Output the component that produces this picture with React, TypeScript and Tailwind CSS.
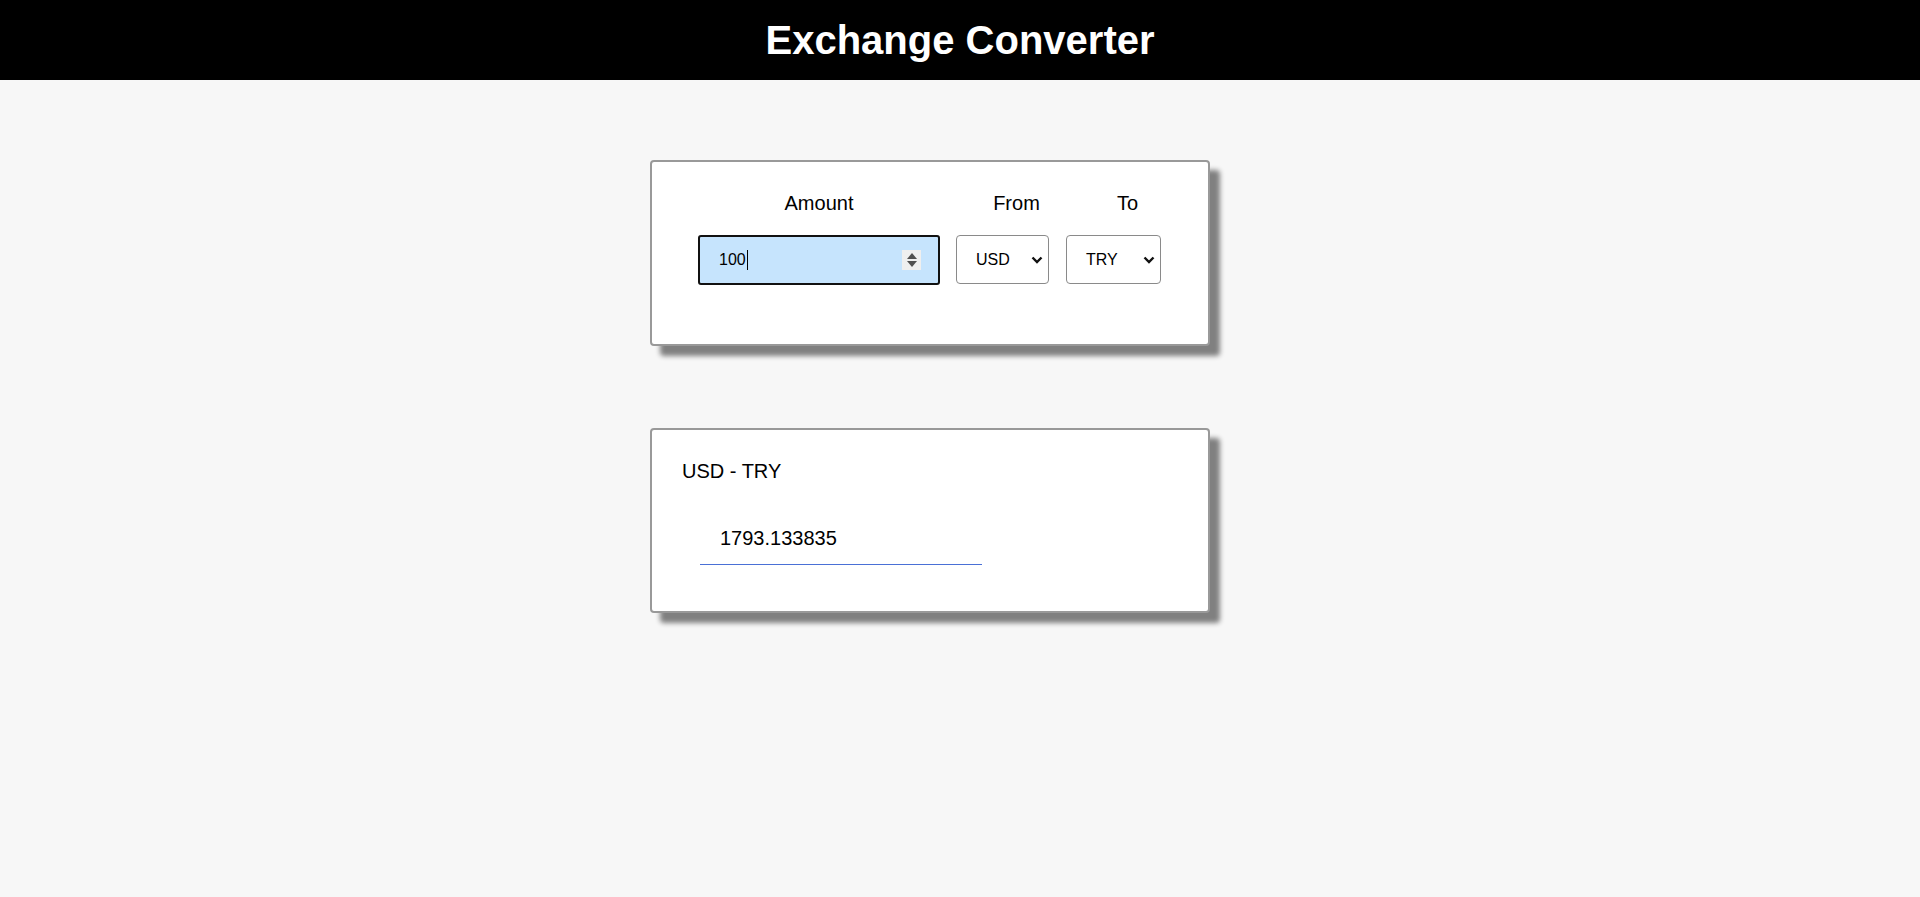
import React from 'react';

const font = { fontFamily: '"Liberation Sans", Arial, sans-serif' };

function Chevron() {
  return (
    <svg width="12" height="8" viewBox="0 0 12 8" className="shrink-0">
      <polyline points="1.5,1.5 6,6 10.5,1.5" fill="none" stroke="#111" strokeWidth="2.4" />
    </svg>
  );
}

function Spinner() {
  return (
    <div className="flex h-[20px] w-[19px] flex-col items-center justify-center gap-[2px] bg-[#efefef]">
      <svg width="10" height="6" viewBox="0 0 10 6">
        <polygon points="5,0 10,6 0,6" fill="#505050" />
      </svg>
      <svg width="10" height="6" viewBox="0 0 10 6">
        <polygon points="0,0 10,0 5,6" fill="#505050" />
      </svg>
    </div>
  );
}

function CurrencySelect({ value }: { value: string }) {
  return (
    <div className="flex h-[49px] items-center justify-between rounded-[4px] border border-[#8a8a8a] bg-white pl-[19px] pr-[5px] text-[16px] text-black">
      <span>{value}</span>
      <Chevron />
    </div>
  );
}

export default function App() {
  return (
    <div className="min-h-screen bg-[#f7f7f7]" style={font}>
      <header className="flex h-20 items-center justify-center bg-black">
        <h1 className="text-[40px] font-bold leading-none text-white">Exchange Converter</h1>
      </header>

      <main className="flex flex-col items-center pt-20">
        {/* converter form */}
        <div className="mr-[60px] h-[186px] w-[560px] rounded-[4px] border-2 border-[#999] bg-white pl-[46px] pt-[30px] shadow-[10px_10px_5px_#808080]">
          <div className="flex gap-[16px]">
            <div className="flex w-[242px] flex-col items-center gap-[20px]">
              <span className="text-[20px] leading-[23px] text-black">Amount</span>
              <div className="flex h-[50px] w-full items-center justify-between rounded-[3px] border-2 border-[#111] bg-[#c6e4fd] pl-[19px] pr-[17px] text-[16px] text-black">
                <span className="flex items-center">
                  100
                  <span className="ml-[1px] inline-block h-[20px] w-[1px] bg-black" />
                </span>
                <Spinner />
              </div>
            </div>
            <div className="flex w-[93px] flex-col gap-[20px]">
              <span className="pl-[28px] text-center text-[20px] leading-[23px] text-black">From</span>
              <CurrencySelect value="USD" />
            </div>
            <div className="ml-[1px] flex w-[95px] flex-col gap-[20px]">
              <span className="pl-[28px] text-center text-[20px] leading-[23px] text-black">To</span>
              <CurrencySelect value="TRY" />
            </div>
          </div>
        </div>

        {/* result */}
        <div className="mr-[60px] mt-[82px] h-[185px] w-[560px] rounded-[4px] border-2 border-[#999] bg-white pl-[30px] pt-[30px] shadow-[10px_10px_5px_#808080]">
          <div className="text-[20px] leading-[23px] text-black">USD - TRY</div>
          <div className="ml-[18px] mt-[44px] w-[282px] border-b border-[#4a70d6] pb-[14px] pl-[20px] text-[20px] leading-[23px] text-black">
            1793.133835
          </div>
        </div>
      </main>
    </div>
  );
}
